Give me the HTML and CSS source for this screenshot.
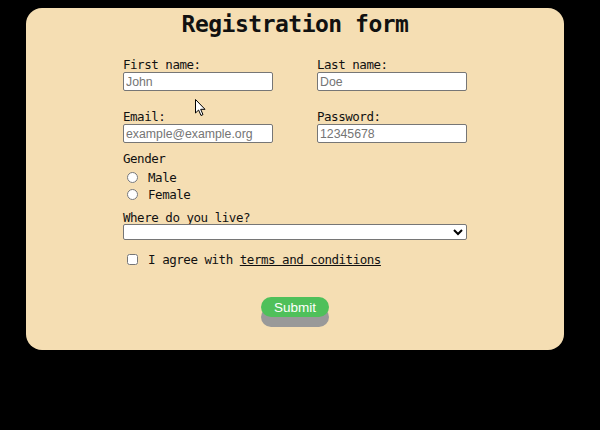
FILE: index.html
```html
<!DOCTYPE html>
<html lang="en">
<head>
<meta charset="utf-8">
<title>Registration form</title>
<link rel="stylesheet" href="styles.css">
</head>
<body>
<div class="card">
  <h1 class="title">Registration form</h1>
  <form class="form">
    <div class="grid">
      <div class="field">
        <label class="label" for="fn">First name:</label>
        <input class="text" id="fn" type="text" placeholder="John">
      </div>
      <div class="field">
        <label class="label" for="ln">Last name:</label>
        <input class="text" id="ln" type="text" placeholder="Doe">
      </div>
      <div class="field">
        <label class="label" for="em">Email:</label>
        <input class="text" id="em" type="email" placeholder="example@example.org">
      </div>
      <div class="field">
        <label class="label" for="pw">Password:</label>
        <input class="text" id="pw" type="text" placeholder="12345678">
      </div>
    </div>
    <div class="gender">
      <div class="label">Gender</div>
      <label class="option"><input class="radio" type="radio" name="g"> Male</label>
      <label class="option"><input class="radio" type="radio" name="g"> Female</label>
    </div>
    <div class="where">
      <label class="label where-label" for="loc">Where do you live?</label>
      <select class="select" id="loc"><option></option></select>
    </div>
    <label class="agree"><input class="check" type="checkbox"> I agree with <a class="link" href="#">terms and conditions</a></label>
    <div class="actions"><button class="submit" type="button">Submit</button></div>
  </form>
  <svg class="cursor" width="12" height="18" viewBox="0 0 12 18"><path d="M0.5 0.5 L0.5 14 L3.6 11 L6 16.5 L8 15.6 L5.7 10.3 L10 10.3 Z" fill="#fff" stroke="#000" stroke-width="1"/></svg>
</div>
</body>
</html>
```
FILE: styles.css
```css
html, body {
  margin: 0;
  background: #000;
}
body {
  padding: 8px 0 0 26px;
  width: 600px;
  height: 430px;
  box-sizing: border-box;
  overflow: hidden;
}
.card {
  position: relative;
  width: 538px;
  height: 342px;
  box-sizing: border-box;
  background: #f5deb3;
  border-radius: 16px;
  display: flex;
  flex-direction: column;
  align-items: center;
  font-family: "DejaVu Sans Mono", monospace;
  color: #111;
}
.title {
  margin: 3px 0 0;
  font-size: 23px;
  line-height: 26px;
  letter-spacing: -0.5px;
  font-weight: bold;
}
.form {
  width: 344px;
  margin-top: 21px;
  display: flex;
  flex-direction: column;
}
.grid {
  display: grid;
  grid-template-columns: 150px 150px;
  column-gap: 44px;
  row-gap: 19px;
}
.field {
  display: flex;
  flex-direction: column;
}
.label,
.option,
.agree {
  font-size: 12.5px;
  letter-spacing: -0.47px;
}
.label {
  line-height: 14px;
}
.text {
  box-sizing: border-box;
  width: 150px;
  height: 19px;
  margin: 0;
  padding: 0 2px;
  border: 1px solid #767676;
  border-radius: 2px;
  background: #fff;
  font-family: "Liberation Sans", Arial, sans-serif;
  font-size: 12.3px;
}
.text::placeholder {
  color: #757575;
}
.gender {
  margin-top: 9px;
  display: flex;
  flex-direction: column;
}
.gender .label {
  margin-bottom: 3px;
}
.option {
  display: flex;
  align-items: center;
  height: 17px;
  white-space: pre;
}
.radio {
  width: 11px;
  height: 11px;
  margin: 0 3px 0 4px;
}
.where {
  margin-top: 8px;
  display: flex;
  flex-direction: column;
}
.where-label {
  line-height: 13px;
}
.select {
  box-sizing: border-box;
  width: 344px;
  height: 16px;
  margin: 0;
  border: 1px solid #767676;
  border-radius: 2px;
  background: #fff;
  font-size: 11px;
}
.agree {
  margin-top: 12px;
  display: flex;
  align-items: center;
  height: 14px;
  white-space: pre;
}
.check {
  width: 11px;
  height: 11px;
  margin: 0 3px 0 4px;
}
.link {
  color: #111;
  text-decoration: underline;
}
.actions {
  display: flex;
  justify-content: center;
  margin-top: 31px;
}
.submit {
  width: 68px;
  height: 20px;
  padding: 0;
  border: none;
  border-radius: 10px;
  background: #4fc05a;
  color: #fff;
  font-family: "Liberation Sans", Arial, sans-serif;
  font-size: 13.5px;
  box-shadow: 0 10px 0 #999;
}
.cursor {
  position: absolute;
  left: 169px;
  top: 91px;
}
```
